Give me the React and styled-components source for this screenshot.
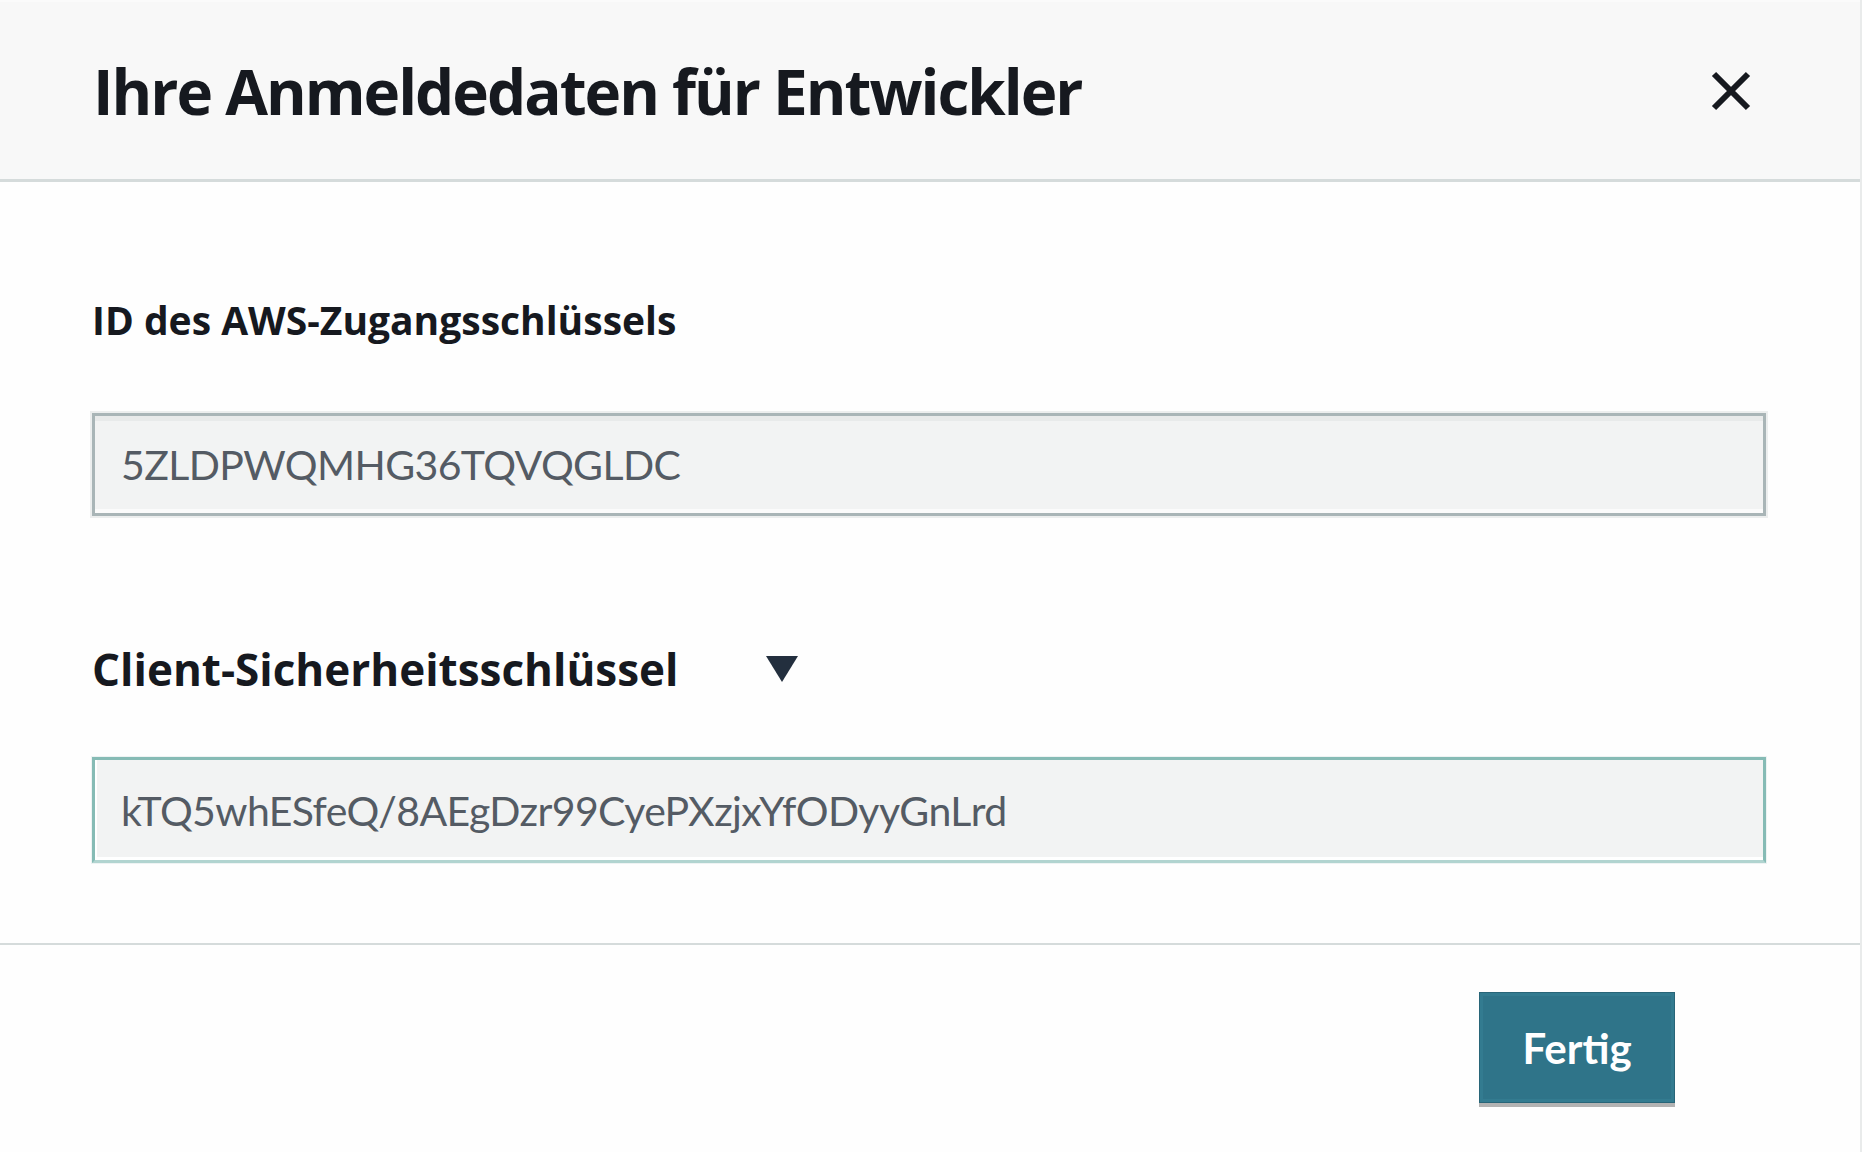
import React, { Component } from 'react';
import styled, { createGlobalStyle } from 'styled-components'

const GlobalStyle = createGlobalStyle`
  html, body {
    margin: 0;
    padding: 0;
    background: #fefefe;
  }
  body {
    font-family: Lato, "Open Sans", "Liberation Sans", sans-serif;
    color: #16191f;
  }
`

class App extends Component {
  constructor(props) {
    super(props);
    this.state = { showSecret: true }
  }
  render() {
    return (
      <DialogStyle>
        <GlobalStyle />
        <div className="header">
          <h1 className="title">Ihre Anmeldedaten für Entwickler</h1>
          <button className="close" aria-label="Schließen">
            <svg width="42" height="40" viewBox="0 0 42 40">
              <path d="M4 3 L38 37 M38 3 L4 37" stroke="#16191f" strokeWidth="6" strokeLinecap="butt" />
            </svg>
          </button>
        </div>

        <div className="body">
          <Field>
            <Label>ID des AWS-Zugangsschlüssels</Label>
            <KeyInput readOnly value="5ZLDPWQMHG36TQVQGLDC" />
          </Field>
          <Field second>
            <Label big onClick={this.toggleSecret}>
              Client-Sicherheitsschlüssel
              <span className="caret" />
            </Label>
            <KeyInput focused readOnly value="kTQ5whESfeQ/8AEgDzr99CyePXzjxYfODyyGnLrd" />
          </Field>
        </div>

        <div className="footer">
          <button className="done">Fertig</button>
        </div>
      </DialogStyle>
    );
  }

  toggleSecret = () => {
    this.setState({ showSecret: !this.state.showSecret })
  }
}

const Field = styled.div`
  display: flex;
  flex-direction: column;
  gap: ${props => props.second ? '66px' : '74px'};
  margin-top: ${props => props.second ? '131px' : '0'};
`

const Label = styled.div`
  display: flex;
  align-items: center;
  font-family: "Open Sans", Lato, "Liberation Sans", sans-serif;
  font-weight: 700;
  font-size: ${props => props.big ? '44px' : '39px'};
  line-height: 1;
  color: #16191f;
  cursor: ${props => props.big ? 'pointer' : 'default'};
  .caret{
    margin-left: 88px;
    width: 0;
    height: 0;
    border-left: 16px solid transparent;
    border-right: 16px solid transparent;
    border-top: 26px solid #232f3e;
  }
`

const KeyInput = styled.input`
  box-sizing: border-box;
  width: 100%;
  height: ${props => props.focused ? '106px' : '103px'};
  padding: 0 26px;
  border: 3px solid ${props => props.focused ? '#86bbb5' : '#a9b5b7'};
  border-bottom-color: ${props => props.focused ? '#b1d4d0' : '#a9b5b7'};
  background: #f2f3f3;
  box-shadow: ${props => props.focused
    ? 'inset 2px 0 0 #ffffff, inset 0 -3px 0 #ffffff, 0 0 0 1px #eef3f3'
    : 'inset 0 5px 0 #e8eaea, inset 0 -4px 0 #fbfbfb, 0 0 0 2px #eceeee'};
  font-family: Lato, "Open Sans", "Liberation Sans", sans-serif;
  font-size: 41px;
  letter-spacing: -0.6px;
  color: #545b64;
  outline: none;
`

export const DialogStyle = styled.div`
  box-sizing: border-box;
  width: 1862px;
  height: 1152px;
  border-right: 2px solid #e9ebeb;
  background: #fefefe;
  display: flex;
  flex-direction: column;
.header{
  box-sizing: border-box;
  height: 182px;
  background: #f8f8f8;
  border-bottom: 3px solid #d5dbdb;
  border-top: 2px solid #fbfbfb;
  display: flex;
  align-items: center;
  justify-content: space-between;
  padding: 0 108px 0 93px;
}
.title{
  margin: 0;
  font-family: "Open Sans", Lato, "Liberation Sans", sans-serif;
  font-size: 62px;
  font-weight: 700;
  line-height: 1;
  letter-spacing: -2px;
  color: #16191f;
}
.close{
  border: 0;
  background: transparent;
  padding: 0;
  display: flex;
  cursor: pointer;
}
.body{
  box-sizing: border-box;
  height: 763px;
  padding: 118px 94px 0 92px;
  border-bottom: 2px solid #d5dbdb;
}
.footer{
  flex: 1;
  display: flex;
  justify-content: flex-end;
  align-items: flex-start;
  padding: 47px 185px 0 0;
}
.done{
  width: 196px;
  height: 111px;
  background: #2f7489;
  border: 1px solid #286578;
  box-shadow: inset 0 0 0 3px #337b90, 0 4px 0 #b3b3b3;
  color: #ffffff;
  font-family: Lato, "Open Sans", "Liberation Sans", sans-serif;
  font-size: 42px;
  font-weight: 700;
  cursor: pointer;
}
`

export default App;
